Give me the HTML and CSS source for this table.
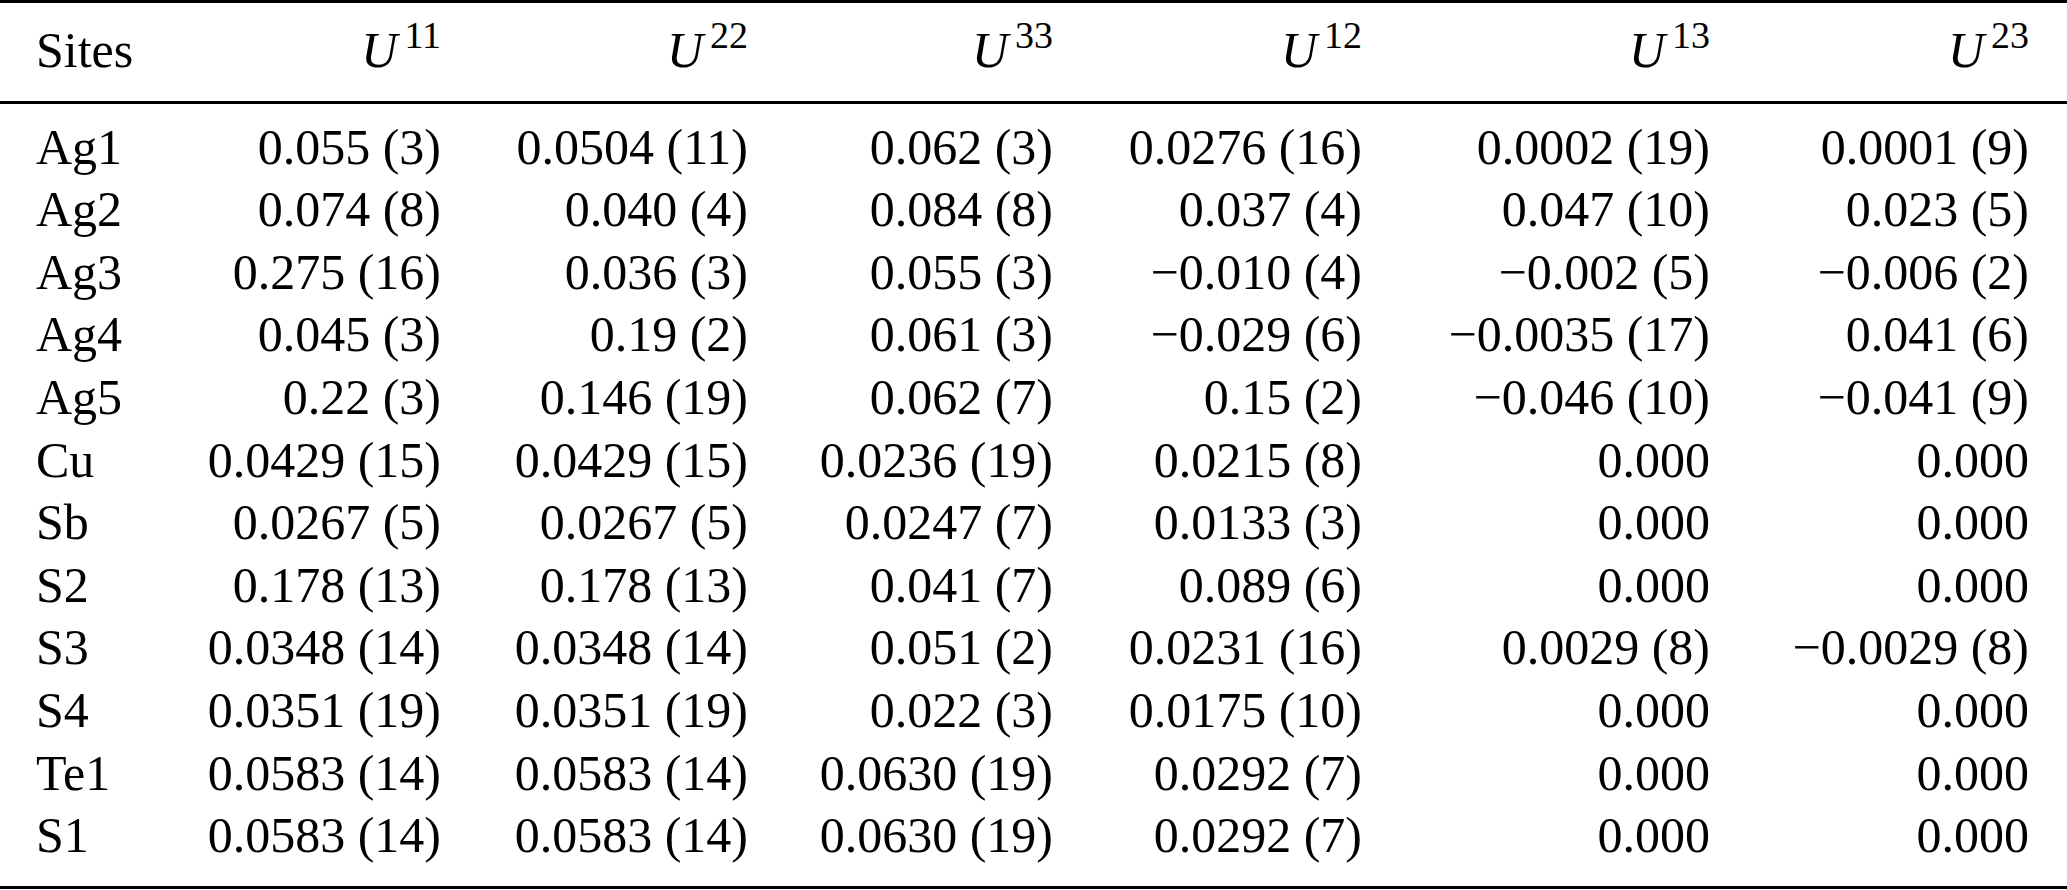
FILE: index.html
```html
<!DOCTYPE html>
<html>
<head>
<meta charset="utf-8">
<link rel="stylesheet" href="styles.css">
</head>
<body>
<table class="utab">
<colgroup>
<col class="col-site">
<col class="col-u11">
<col class="col-u22">
<col class="col-u33">
<col class="col-u12">
<col class="col-u13">
<col class="col-u23">
</colgroup>
<thead>
<tr>
<th>Sites</th>
<th><span class="u">U</span><sup>11</sup></th>
<th><span class="u">U</span><sup>22</sup></th>
<th><span class="u">U</span><sup>33</sup></th>
<th><span class="u">U</span><sup>12</sup></th>
<th><span class="u">U</span><sup>13</sup></th>
<th><span class="u">U</span><sup>23</sup></th>
</tr>
</thead>
<tbody>
<tr class="first"><td>Ag1</td><td>0.055 (3)</td><td>0.0504 (11)</td><td>0.062 (3)</td><td>0.0276 (16)</td><td>0.0002 (19)</td><td>0.0001 (9)</td></tr>
<tr><td>Ag2</td><td>0.074 (8)</td><td>0.040 (4)</td><td>0.084 (8)</td><td>0.037 (4)</td><td>0.047 (10)</td><td>0.023 (5)</td></tr>
<tr><td>Ag3</td><td>0.275 (16)</td><td>0.036 (3)</td><td>0.055 (3)</td><td>−0.010 (4)</td><td>−0.002 (5)</td><td>−0.006 (2)</td></tr>
<tr><td>Ag4</td><td>0.045 (3)</td><td>0.19 (2)</td><td>0.061 (3)</td><td>−0.029 (6)</td><td>−0.0035 (17)</td><td>0.041 (6)</td></tr>
<tr><td>Ag5</td><td>0.22 (3)</td><td>0.146 (19)</td><td>0.062 (7)</td><td>0.15 (2)</td><td>−0.046 (10)</td><td>−0.041 (9)</td></tr>
<tr><td>Cu</td><td>0.0429 (15)</td><td>0.0429 (15)</td><td>0.0236 (19)</td><td>0.0215 (8)</td><td>0.000</td><td>0.000</td></tr>
<tr><td>Sb</td><td>0.0267 (5)</td><td>0.0267 (5)</td><td>0.0247 (7)</td><td>0.0133 (3)</td><td>0.000</td><td>0.000</td></tr>
<tr><td>S2</td><td>0.178 (13)</td><td>0.178 (13)</td><td>0.041 (7)</td><td>0.089 (6)</td><td>0.000</td><td>0.000</td></tr>
<tr><td>S3</td><td>0.0348 (14)</td><td>0.0348 (14)</td><td>0.051 (2)</td><td>0.0231 (16)</td><td>0.0029 (8)</td><td>−0.0029 (8)</td></tr>
<tr><td>S4</td><td>0.0351 (19)</td><td>0.0351 (19)</td><td>0.022 (3)</td><td>0.0175 (10)</td><td>0.000</td><td>0.000</td></tr>
<tr><td>Te1</td><td>0.0583 (14)</td><td>0.0583 (14)</td><td>0.0630 (19)</td><td>0.0292 (7)</td><td>0.000</td><td>0.000</td></tr>
<tr class="last"><td>S1</td><td>0.0583 (14)</td><td>0.0583 (14)</td><td>0.0630 (19)</td><td>0.0292 (7)</td><td>0.000</td><td>0.000</td></tr>
</tbody>
</table>
</body>
</html>
```
FILE: styles.css
```css
html, body {
  margin: 0;
  padding: 0;
  background: #ffffff;
}
body {
  width: 2067px;
  height: 890px;
  overflow: hidden;
  color: #000000;
  font-family: "Liberation Serif", "Times New Roman", serif;
}
.utab {
  width: 2067px;
  table-layout: fixed;
  border-collapse: separate;
  border-spacing: 0;
  border-top: 3px solid #000;
  border-bottom: 3px solid #000;
  font-size: 50px;
  line-height: 62.6px;
}
.col-site { width: 153px; }
.col-u11 { width: 288px; }
.col-u22 { width: 307px; }
.col-u33 { width: 305px; }
.col-u12 { width: 309px; }
.col-u13 { width: 348px; }
.col-u23 { width: 357px; }
.utab th, .utab td {
  padding: 0;
  text-align: right;
  white-space: nowrap;
  font-weight: normal;
}
.utab th:first-child, .utab td:first-child {
  text-align: left;
  padding-left: 36px;
}
.utab th:last-child, .utab td:last-child {
  padding-right: 38px;
}
.utab thead th {
  padding-top: 16px;
  padding-bottom: 19px;
  border-bottom: 3px solid #000;
}
.utab .first td { padding-top: 12px; }
.utab .last td { padding-bottom: 19px; }
.u {
  font-style: italic;
}
.utab sup {
  font-size: 38px;
  line-height: 0;
  vertical-align: 19px;
  margin-left: 7px;
}
```
